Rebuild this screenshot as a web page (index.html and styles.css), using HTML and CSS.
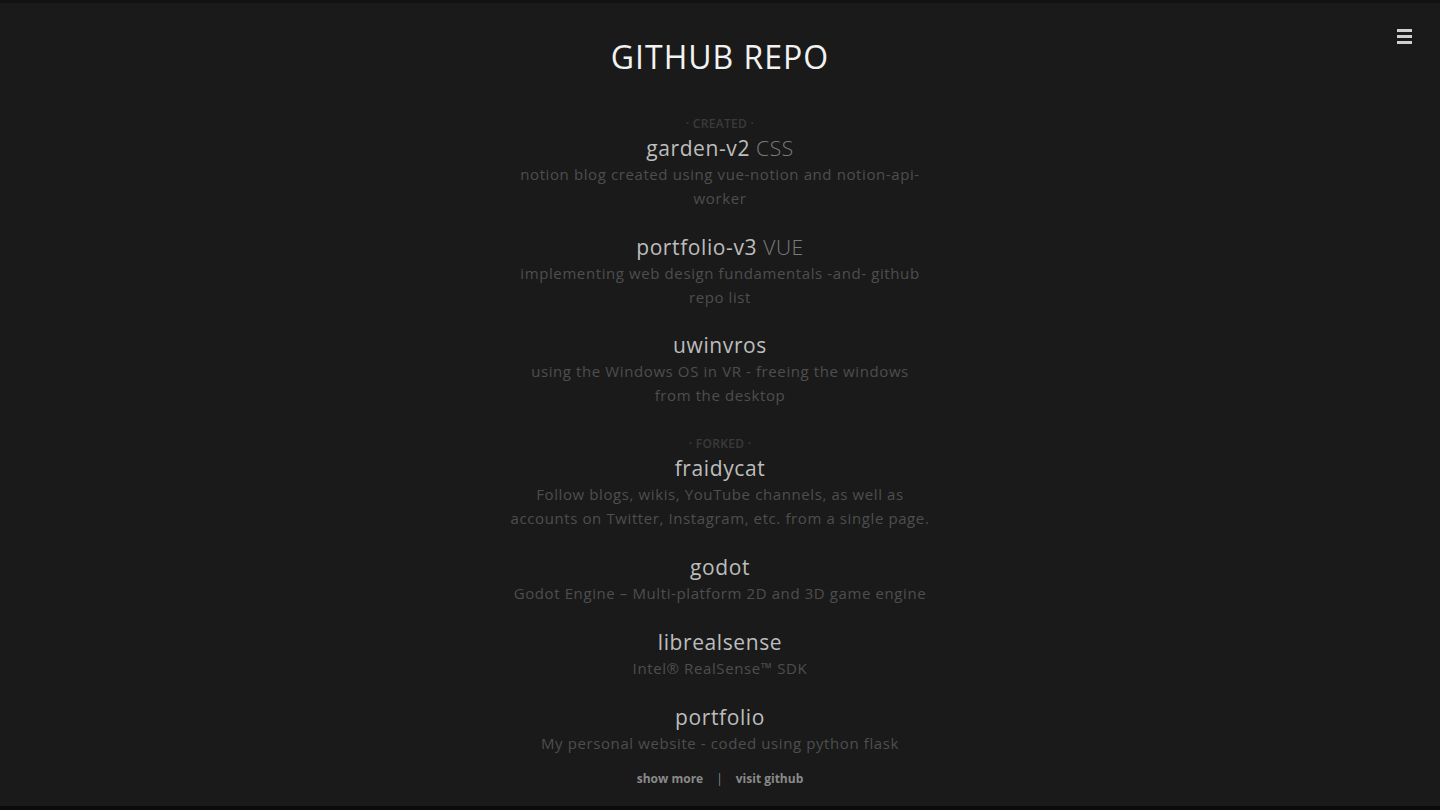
FILE: index.html
```html
<!DOCTYPE html>
<html lang="en">
<head>
    <meta charset="UTF-8">
    <meta name="viewport" content="width=device-width, initial-scale=1.0">
    <title>GitHub Repo</title>
    <link rel="stylesheet" href="styles.css">
</head>
<body>

    <button class="menu-btn" aria-label="menu">
        <span></span><span></span><span></span>
    </button>

    <main class="page">
        <h1>GITHUB REPO</h1>

        <section class="group">
            <div class="group-label">&middot; CREATED &middot;</div>
            <div class="repo">
                <div class="repo-name">garden-v2 <span class="lang">CSS</span></div>
                <p class="repo-desc">notion blog created using vue-notion and notion-api-worker</p>
            </div>
            <div class="repo">
                <div class="repo-name">portfolio-v3 <span class="lang">VUE</span></div>
                <p class="repo-desc">implementing web design fundamentals -and- github repo list</p>
            </div>
            <div class="repo">
                <div class="repo-name">uwinvros</div>
                <p class="repo-desc">using the Windows OS in VR - freeing the windows<br>from the desktop</p>
            </div>
        </section>

        <section class="group forked">
            <div class="group-label">&middot; FORKED &middot;</div>
            <div class="repo">
                <div class="repo-name">fraidycat</div>
                <p class="repo-desc">Follow blogs, wikis, YouTube channels, as well as accounts on Twitter, Instagram, etc. from a single page.</p>
            </div>
            <div class="repo">
                <div class="repo-name">godot</div>
                <p class="repo-desc">Godot Engine &ndash; Multi-platform 2D and 3D game engine</p>
            </div>
            <div class="repo">
                <div class="repo-name">librealsense</div>
                <p class="repo-desc">Intel&reg; RealSense&trade; SDK</p>
            </div>
            <div class="repo">
                <div class="repo-name">portfolio</div>
                <p class="repo-desc">My personal website - coded using python flask</p>
            </div>
        </section>

        <!-- footer links -->
        <nav class="links">
            <a href="#">show more</a>
            <span class="sep">|</span>
            <a href="#">visit github</a>
        </nav>
    </main>

</body>
</html>
```

FILE: styles.css
```css
* {
    box-sizing: border-box;
}

body {
    font-family: "Open Sans", "DejaVu Sans", sans-serif;
    background-color: #1a1a1a;
    color: #bbb;
    margin: 0;
    padding: 0;
    height: 100vh;
    border-top: 3px solid #121212;
    border-bottom: 4px solid #0b0b0b;
    overflow: hidden;
}

.menu-btn {
    position: absolute;
    top: 29px;
    right: 28px;
    width: 15px;
    height: 15px;
    padding: 0;
    border: none;
    background: none;
    display: flex;
    flex-direction: column;
    justify-content: space-between;
    cursor: pointer;
}

.menu-btn span {
    display: block;
    height: 3px;
    background-color: #cfcfcf;
}

.page {
    display: flex;
    flex-direction: column;
    align-items: center;
    text-align: center;
}

h1 {
    color: #f2f2f2;
    font-weight: 400;
    font-size: 32px;
    letter-spacing: 1px;
    line-height: 40px;
    margin: 34px 0 0;
}

.group {
    width: 432px;
    margin-top: 40px;
}

.group + .group {
    margin-top: 7px;
}

.group-label {
    font-size: 12px;
    font-weight: 600;
    line-height: 14px;
    color: #3a3a3a;
    margin-bottom: 3px;
    letter-spacing: 0.3px;
}

.repo {
    margin-bottom: 22.5px;
}

.forked .repo {
    margin-bottom: 23px;
}

.repo-name {
    font-size: 21px;
    line-height: 28px;
    color: #bdbdbd;
    letter-spacing: 0.6px;
}

.lang {
    color: #7c7c7c;
    font-weight: 300;
}

.repo-desc {
    margin: 0;
    font-size: 15px;
    line-height: 24px;
    color: #4e4e4e;
    letter-spacing: 0.6px;
}

.links {
    margin-top: -8px;
    font-size: 12px;
    font-weight: 700;
    color: #8a8a8a;
    display: flex;
    gap: 13px;
}

.links a {
    color: #8a8a8a;
    text-decoration: none;
}

.links .sep {
    font-weight: 400;
}
```
